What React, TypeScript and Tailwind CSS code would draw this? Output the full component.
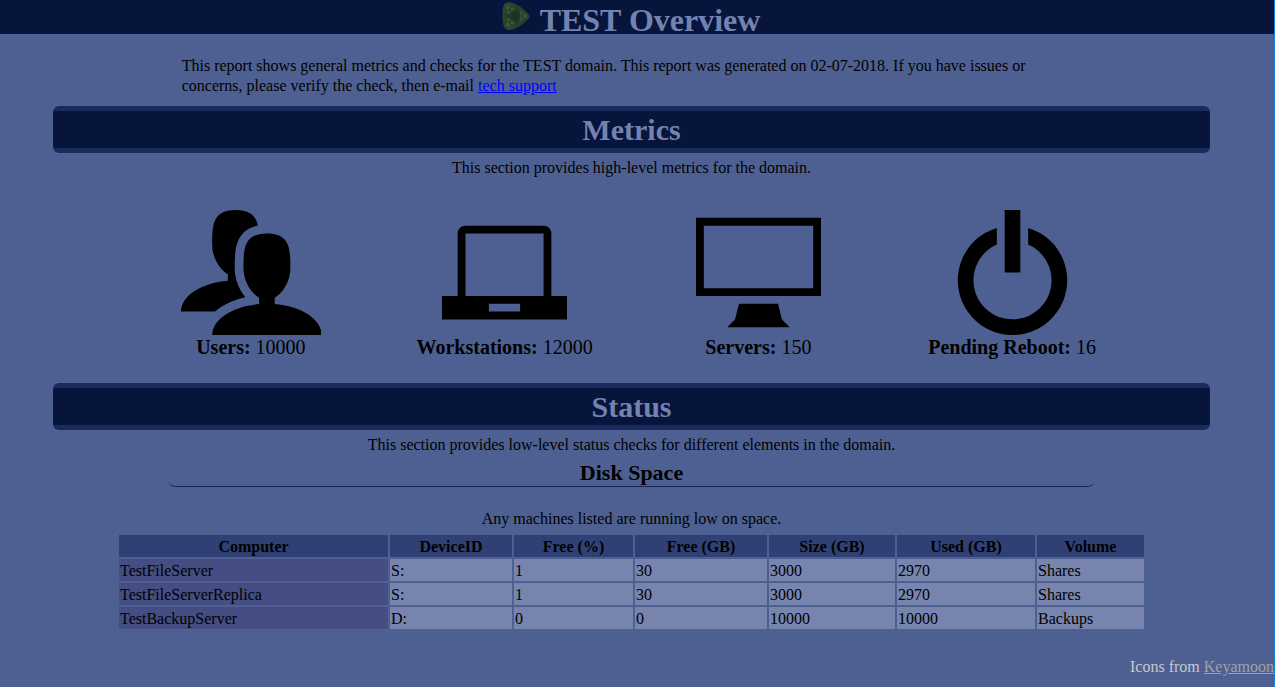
import type { ReactNode } from "react";

const metrics: { label: string; value: number; viewBox: string; icon: ReactNode }[] = [
  {
    label: "Users",
    value: 10000,
    viewBox: "0 0 18 16",
    icon: (
      <>
        <path d="M12 12.041v-0.825c1.102-0.621 2-2.168 2-3.716 0-2.485 0-4.5-3-4.5s-3 2.015-3 4.5c0 1.548 0.898 3.095 2 3.716v0.825c-3.392 0.277-6 1.944-6 3.959h14c0-2.015-2.608-3.682-6-3.959z" />
        <path d="M5.112 12.427c0.864-0.565 1.939-0.994 3.122-1.256-0.235-0.278-0.449-0.588-0.633-0.922-0.475-0.863-0.726-1.813-0.726-2.748 0-1.344 0-2.614 0.478-3.653 0.464-1.008 1.299-1.633 2.488-1.867-0.264-1.195-0.968-1.98-2.841-1.98-3 0-3 2.015-3 4.5 0 1.548 0.898 3.095 2 3.716v0.825c-3.392 0.277-6 1.944-6 3.959h4.359c0.227-0.202 0.478-0.393 0.753-0.573z" />
      </>
    ),
  },
  {
    label: "Workstations",
    value: 12000,
    viewBox: "0 0 16 16",
    icon: (
      <path d="M14 11v-8c0-0.55-0.45-1-1-1h-10c-0.55 0-1 0.45-1 1v8h-2v3h16v-3h-2zM10 13h-4v-1h4v1zM13 11h-10v-8h10v8z" />
    ),
  },
  {
    label: "Servers",
    value: 150,
    viewBox: "0 0 16 16",
    icon: (
      <path
        fillRule="evenodd"
        d="M0 1v10h16v-10h-16zM15 10h-14v-8h14v8zM10.5 12h-5l-0.5 2-1 1h8l-1-1z"
      />
    ),
  },
  {
    label: "Pending Reboot",
    value: 16,
    viewBox: "0 0 16 16",
    icon: (
      <path d="M7 0h2v8h-2zM10 2.29v2.127a5 5 0 1 1-4 0v-2.127a7 7 0 1 0 4 0z" />
    ),
  },
];

const columns = [
  { name: "Computer", width: "w-[269px]" },
  { name: "DeviceID", width: "w-[122px]" },
  { name: "Free (%)", width: "w-[119px]" },
  { name: "Free (GB)", width: "w-[132px]" },
  { name: "Size (GB)", width: "w-[126px]" },
  { name: "Used (GB)", width: "w-[138px]" },
  { name: "Volume", width: "w-[107px]" },
];

const rows = [
  ["TestFileServer", "S:", "1", "30", "3000", "2970", "Shares"],
  ["TestFileServerReplica", "S:", "1", "30", "3000", "2970", "Shares"],
  ["TestBackupServer", "D:", "0", "0", "10000", "10000", "Backups"],
];

function Logo() {
  return (
    <svg viewBox="0 0 28 30" className="h-[30px] w-7" aria-hidden="true">
      <defs>
        <radialGradient id="leaf">
          <stop offset="0" stopColor="#1a2b22" />
          <stop offset="0.5" stopColor="#263b2a" />
          <stop offset="1" stopColor="#2d452c" />
        </radialGradient>
      </defs>
      <path
        d="M1 7C1.500 3 4 .8 8 1.300C15 3 23 8 26.500 13.500C27.500 15 27.500 16 26.500 17.500C22 23 15 28 8 29C4 29.300 2 27 1.200 23C.3 18 .3 12 1 7Z"
        fill="url(#leaf)"
      />
      <g fill="none" stroke="#3b5f42" strokeWidth="0.8">
        <path d="M5 6l6 2-4 4zM5 24l6-2-4-4zM24 15l-5-4v8z" />
        <circle cx="6" cy="6" r="1.500" />
        <circle cx="11" cy="8" r="1.200" />
        <circle cx="6.500" cy="11.500" r="1.200" />
        <circle cx="6" cy="24" r="1.500" />
        <circle cx="11" cy="22" r="1.200" />
        <circle cx="6.500" cy="18.500" r="1.200" />
        <circle cx="23" cy="15" r="1.500" />
        <circle cx="19" cy="11.500" r="1.200" />
        <circle cx="19" cy="18.500" r="1.200" />
      </g>
    </svg>
  );
}

function Banner({ children }: { children: ReactNode }) {
  return (
    <h2 className="rounded-md border-y-[5px] border-[#1a2a5c] bg-[#07153d] text-center text-[30px] leading-[37px] font-bold text-[#7482b0]">
      {children}
    </h2>
  );
}

export default function App() {
  return (
    <div className="min-h-screen border-r border-[#1b7fd6] bg-[#4e6092] font-['Liberation_Serif',serif] text-[16px] leading-5 text-black">
      <header className="flex h-[34px] items-start justify-center gap-2.5 bg-[#07153d] pr-3">
        <div className="pt-px">
          <Logo />
        </div>
        <h1 className="pt-0.5 text-[32px] leading-9 font-bold text-[#7482b0]">TEST Overview</h1>
      </header>

      <main className="pt-[22px] pr-16 pl-[53px]">
        <p className="mx-auto w-4/5 px-[13px] pb-2.5">
          This report shows general metrics and checks for the TEST domain. This report was
          generated on 02-07-2018. If you have issues or concerns, please verify the check, then
          e-mail{" "}
          <a href="#support" className="text-[#0000ff] underline">
            tech support
          </a>
        </p>

        <section>
          <Banner>Metrics</Banner>
          <p className="pt-[5px] text-center">
            This section provides high-level metrics for the domain.
          </p>
          <ul className="grid grid-cols-4 px-[71px] pt-8 pb-6">
            {metrics.map((m) => (
              <li key={m.label} className="flex flex-col items-center text-[20px] leading-6">
                <svg viewBox={m.viewBox} className="h-[125px]" fill="black" aria-hidden="true">
                  {m.icon}
                </svg>
                <span>
                  <b>{m.label}:</b> {m.value}
                </span>
              </li>
            ))}
          </ul>
        </section>

        <section>
          <Banner>Status</Banner>
          <p className="pt-[5px] text-center">
            This section provides low-level status checks for different elements in the domain.
          </p>
          <h3 className="mx-auto mt-1 w-4/5 rounded-md border-b border-[#15255a] text-center text-[22px] leading-[27px] font-bold">
            Disk Space
          </h3>
          <p className="pt-[22px] text-center">Any machines listed are running low on space.</p>
          <table className="mx-auto mt-1 border-separate border-spacing-0.5">
            <thead>
              <tr>
                {columns.map((c) => (
                  <th
                    key={c.name}
                    scope="col"
                    className={`${c.width} bg-[#304074] px-px pt-0.5 font-bold`}
                  >
                    {c.name}
                  </th>
                ))}
              </tr>
            </thead>
            <tbody>
              {rows.map((row) => (
                <tr key={row[0]}>
                  {row.map((cell, i) => (
                    <td key={i} className="bg-[#7784ae] px-px pt-0.5 first:bg-[#444e82]">
                      {cell}
                    </td>
                  ))}
                </tr>
              ))}
            </tbody>
          </table>
        </section>
      </main>

      <footer className="pt-[26px] text-right text-[#c8c8c8]">
        Icons from{" "}
        <a href="#keyamoon" className="text-[#a0a0a0] underline">
          Keyamoon
        </a>
      </footer>
    </div>
  );
}
